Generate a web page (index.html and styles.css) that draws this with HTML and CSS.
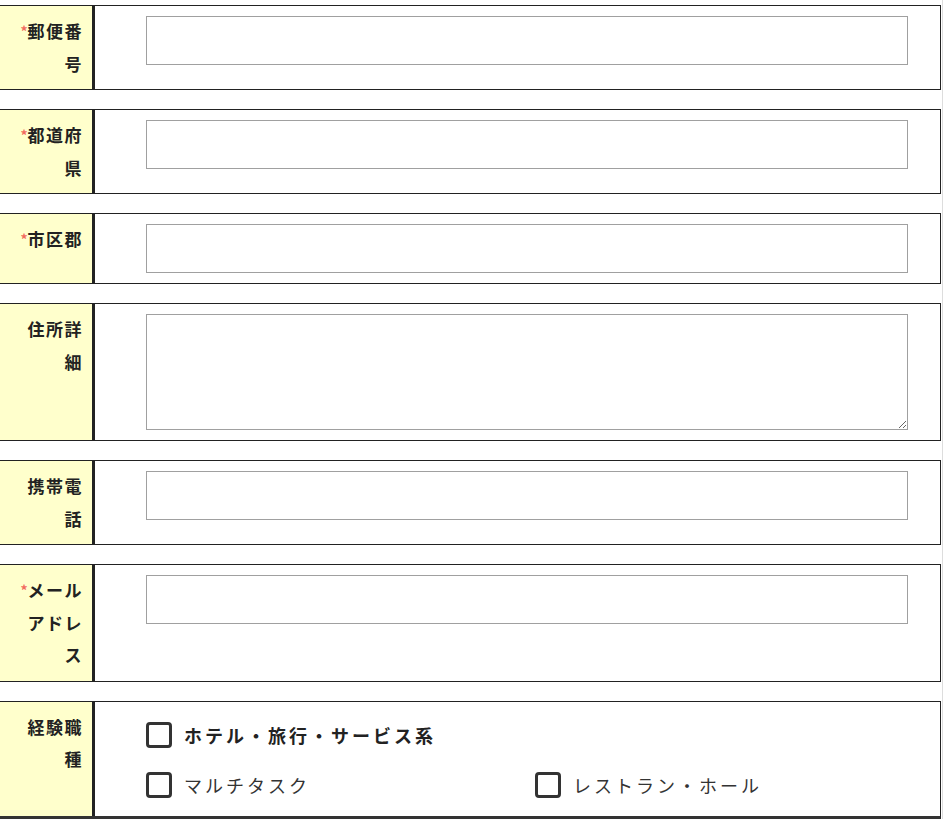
FILE: index.html
```html
<!doctype html>
<html lang="ja">
  <head>
    <meta charset="UTF-8" />
    <meta name="viewport" content="width=device-width, initial-scale=1.0" />
    <title>応募フォーム</title>
    <link rel="stylesheet" href="styles.css">
  </head>
  <body>
    <div class="container">
      <div class="form-row">
        <div class="form-label"><span class="req">*</span>郵便番号</div>
        <div class="form-field"><input type="text" /></div>
      </div>

      <div class="form-row">
        <div class="form-label"><span class="req">*</span>都道府県</div>
        <div class="form-field"><input type="text" /></div>
      </div>

      <div class="form-row">
        <div class="form-label"><span class="req">*</span>市区郡</div>
        <div class="form-field"><input type="text" /></div>
      </div>

      <div class="form-row">
        <div class="form-label">住所詳細</div>
        <div class="form-field"><textarea></textarea></div>
      </div>

      <div class="form-row">
        <div class="form-label">携帯電話</div>
        <div class="form-field"><input type="text" /></div>
      </div>

      <div class="form-row">
        <div class="form-label"><span class="req">*</span>メールアドレス</div>
        <div class="form-field"><input type="text" /></div>
      </div>

      <div class="form-row last">
        <div class="form-label">経験職種</div>
        <div class="form-field options">
          <label class="option option-head">
            <input type="checkbox" />
            <span>ホテル・旅行・サービス系</span>
          </label>
          <label class="option">
            <input type="checkbox" />
            <span>マルチタスク</span>
          </label>
          <label class="option">
            <input type="checkbox" />
            <span>レストラン・ホール</span>
          </label>
        </div>
      </div>
    </div>
  </body>
</html>
```

FILE: styles.css
```css
:root {
  --label-background: #ffffcc;
  --line-color: #222222;
  --text-color: #222222;
  --input-border: #a0a0a0;
  --required-color: #f26a5e;
}

body {
  font-family: "Noto Sans CJK JP", "Noto Sans", sans-serif;
  margin: 0;
  padding: 0;
  background-color: #ffffff;
  color: var(--text-color);
}

.container {
  width: 941px;
  padding: 5px 1px 0 0;
  border-right: 1px solid #dddddd;
  display: flex;
  flex-direction: column;
  gap: 19px;
}

.form-row {
  display: flex;
  border: 1px solid var(--line-color);
  border-left: none;
}

.form-row.last {
  border-bottom: 4px solid #333333;
}

.form-label {
  width: 95px;
  flex-shrink: 0;
  box-sizing: border-box;
  padding: 9px 9px 9px 14px;
  background-color: var(--label-background);
  border-right: 3px solid var(--line-color);
  text-align: right;
  font-size: 17px;
  font-weight: bold;
  line-height: 32.5px;
  letter-spacing: 1.5px;
}

.req {
  color: var(--required-color);
  font-size: 14px;
  letter-spacing: 0;
  vertical-align: 1px;
}

.form-field {
  flex: 1;
  padding: 10px 32px 10px 51px;
}

.form-field input[type="text"],
.form-field textarea {
  display: block;
  width: 100%;
  height: 49px;
  box-sizing: border-box;
  border: 1px solid var(--input-border);
  border-radius: 0;
  margin: 0;
  padding: 6px 10px;
  font-size: 16px;
  font-family: inherit;
}

.form-field textarea {
  height: 116px;
  resize: vertical;
}

.options {
  display: grid;
  grid-template-columns: 389px 1fr;
  row-gap: 24px;
  padding-top: 20px;
  padding-bottom: 18px;
}

.option {
  display: flex;
  align-items: center;
  gap: 12px;
  height: 26px;
  font-size: 18px;
  letter-spacing: 3px;
  color: #333333;
  cursor: pointer;
}

.option-head {
  grid-column: 1 / -1;
  font-weight: bold;
  color: var(--text-color);
}

.option input {
  appearance: none;
  width: 26px;
  height: 26px;
  margin: 0;
  flex-shrink: 0;
  border: 3px solid #333333;
  border-radius: 4px;
  background-color: #ffffff;
}

.option input:checked {
  background-color: #333333;
}
```
